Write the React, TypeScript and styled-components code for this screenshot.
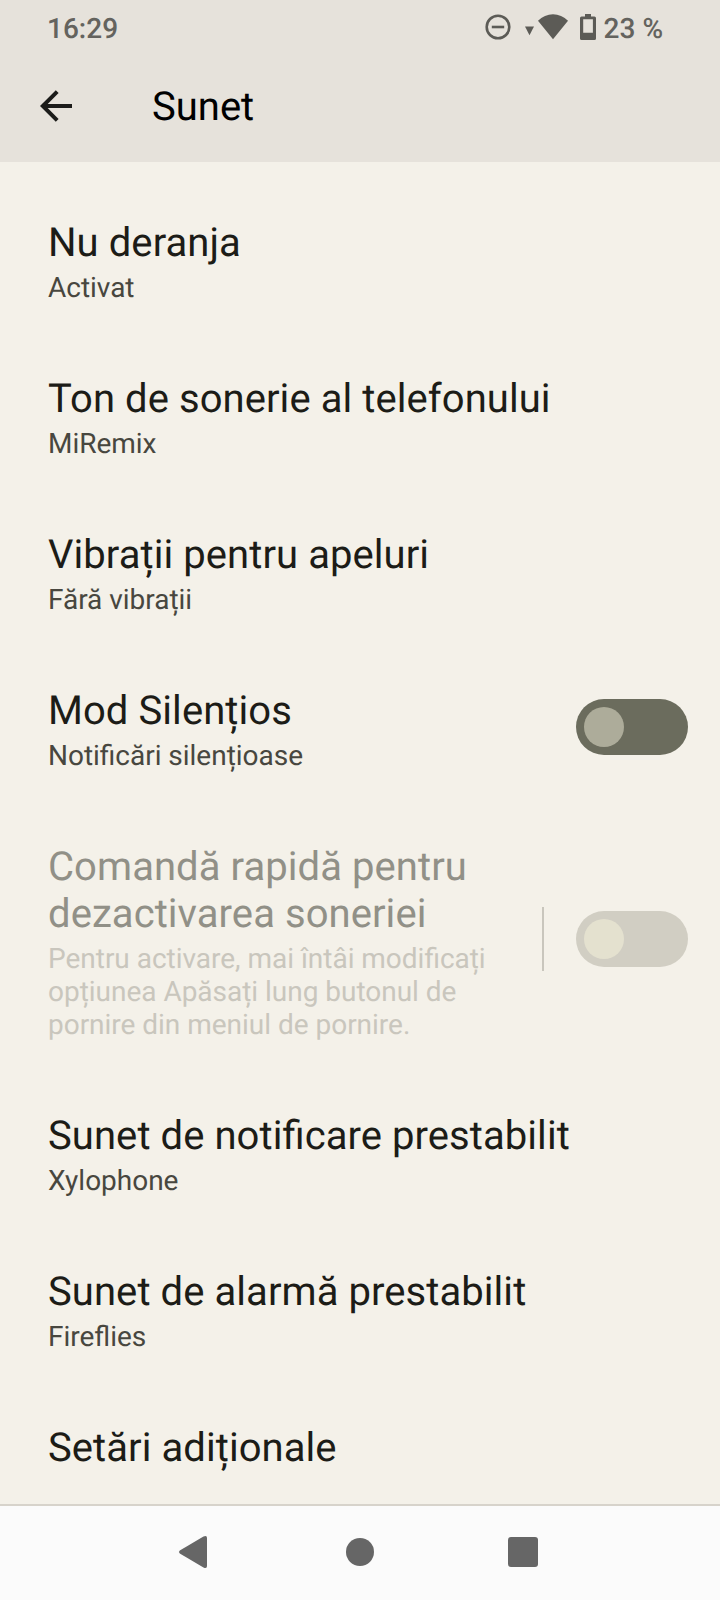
import React from "react";
import styled, { createGlobalStyle } from "styled-components";

const GlobalStyle = createGlobalStyle`
  * { box-sizing: border-box; }
  body {
    margin: 0;
    background: #f4f1e9;
    font-family: Roboto, "Liberation Sans", sans-serif;
    font-feature-settings: "liga" 1;
    text-rendering: geometricPrecision;
  }
`;

const Screen = styled.div`
  display: flex;
  flex-direction: column;
  width: 720px;
  height: 1600px;
  overflow: hidden;
  background: #f4f1e9;
`;

const Header = styled.header`
  flex: none;
  height: 162px;
  background: #e6e2db;
`;

const StatusBar = styled.div`
  display: flex;
  align-items: center;
  justify-content: space-between;
  height: 56px;
  padding: 0 57px 0 47px;
  color: #64635e;
  font-size: 28px;
  font-weight: 500;
  line-height: 33px;
`;

const StatusIcons = styled.div`
  display: flex;
  align-items: center;

  svg {
    flex: none;
    margin: 0 7px 2px 0;
  }
`;

const AppBar = styled.div`
  display: flex;
  align-items: center;
  height: 100px;
  padding-left: 40px;
`;

const BackButton = styled.button`
  display: flex;
  width: 32px;
  height: 32px;
  margin: 0 80px 0 0;
  padding: 0;
  border: 0;
  background: none;
`;

const PageTitle = styled.h1`
  margin: 0;
  color: #000;
  font-size: 40px;
  font-weight: 400;
  line-height: 47px;
`;

const List = styled.main`
  flex: 1;
  min-height: 0;
  padding-top: 19px;
  overflow: hidden;
`;

const Row = styled.section`
  display: flex;
  align-items: center;
  justify-content: space-between;
  padding: 32px 32px 32px 48px;
`;

const Labels = styled.div<{ $narrow?: boolean }>`
  width: ${(p) => (p.$narrow ? "456px" : "auto")};
  padding: 6px 0 1px;
`;

const Title = styled.h2<{ $disabled?: boolean }>`
  margin: 0;
  color: ${(p) => (p.$disabled ? "#919087" : "#1c1c17")};
  font-size: 40px;
  font-weight: 400;
  line-height: 47px;
  letter-spacing: 0.07px;
`;

const Summary = styled.p<{ $disabled?: boolean }>`
  margin: 5px 0 0;
  color: ${(p) => (p.$disabled ? "#c9c6bd" : "#48473f")};
  font-size: 28px;
  line-height: 33px;
  letter-spacing: -0.02px;
`;

const Controls = styled.div`
  display: flex;
  align-items: center;
  gap: 32px;
  margin-bottom: 1px;
`;

const Divider = styled.span`
  width: 2px;
  height: 64px;
  background: #c9c6bd;
`;

const Switch = styled.button<{ $disabled?: boolean }>`
  display: flex;
  align-items: center;
  width: 112px;
  height: 56px;
  padding: 0 8px;
  border: 0;
  border-radius: 28px;
  background: ${(p) => (p.$disabled ? "#d1cec3" : "#6b6c5d")};
`;

const Thumb = styled.span<{ $disabled?: boolean }>`
  width: 40px;
  height: 40px;
  border-radius: 50%;
  background: ${(p) => (p.$disabled ? "#e4e1cf" : "#adac9a")};
`;

const NavBar = styled.nav`
  display: flex;
  flex: none;
  align-items: center;
  justify-content: space-between;
  height: 96px;
  padding: 0 182px 2px 178px;
  border-top: 2px solid #d7d3cb;
  background: #fbfbfb;
`;

type Item = {
  title: string;
  summary?: string;
  toggle?: boolean;
  disabled?: boolean;
};

const items: Item[] = [
  { title: "Nu deranja", summary: "Activat" },
  { title: "Ton de sonerie al telefonului", summary: "MiRemix" },
  { title: "Vibrații pentru apeluri", summary: "Fără vibrații" },
  { title: "Mod Silențios", summary: "Notificări silențioase", toggle: true },
  {
    title: "Comandă rapidă pentru dezactivarea soneriei",
    summary:
      "Pentru activare, mai întâi modificați opțiunea Apăsați lung butonul de pornire din meniul de pornire.",
    toggle: true,
    disabled: true,
  },
  { title: "Sunet de notificare prestabilit", summary: "Xylophone" },
  { title: "Sunet de alarmă prestabilit", summary: "Fireflies" },
  { title: "Setări adiționale" },
];

const StatusGlyphs = () => (
  <svg width="112" height="28" viewBox="485 13 112 28" fill="#5c5b56">
    <circle cx="498" cy="27" r="11.3" fill="none" stroke="#5c5b56" strokeWidth="2.6" />
    <path d="M491.8 25.7h12.4v2.6h-12.4z" />
    <path d="M525 26.5h9l-4.5 8.7z" />
    <path d="M538 20.8Q544.5 14.2 553 14.2T568 20.8L553 39.2z" />
    <path
      fillRule="evenodd"
      d="M585 14h6v2.5h3.4q1.6 0 1.6 1.6v20.3q0 1.6-1.6 1.6h-12.8q-1.6 0-1.6-1.6v-20.3q0-1.6 1.6-1.6h3.4zM583.2 19.2v13.6h9.7v-13.6z"
    />
  </svg>
);

export default function App() {
  return (
    <Screen>
      <GlobalStyle />
      <Header>
        <StatusBar>
          <span>16:29</span>
          <StatusIcons>
            <StatusGlyphs />
            <span>23 %</span>
          </StatusIcons>
        </StatusBar>
        <AppBar>
          <BackButton aria-label="Înapoi">
            <svg width="32" height="32" viewBox="0 0 32 32" fill="none" stroke="#1c1c1a" strokeWidth="4">
              <path d="M32 16H4M17.2 1.6L2.8 16L17.2 30.4" />
            </svg>
          </BackButton>
          <PageTitle>Sunet</PageTitle>
        </AppBar>
      </Header>
      <List>
        {items.map(({ title, summary, toggle, disabled }) => (
          <Row key={title}>
            <Labels $narrow={disabled}>
              <Title $disabled={disabled}>{title}</Title>
              {summary && <Summary $disabled={disabled}>{summary}</Summary>}
            </Labels>
            {toggle && (
              <Controls>
                {disabled && <Divider />}
                <Switch $disabled={disabled} disabled={disabled}>
                  <Thumb $disabled={disabled} />
                </Switch>
              </Controls>
            )}
          </Row>
        ))}
      </List>
      <NavBar>
        <svg width="34" height="34" viewBox="0 0 34 34" fill="#666">
          <path d="M1.8 15.6L25.5 1.5Q29 0 29 3V31Q29 34 25.5 32.5L1.8 18.4Q0 17 1.8 15.6z" />
        </svg>
        <svg width="28" height="28" viewBox="0 0 28 28" fill="#666">
          <circle cx="14" cy="14" r="14" />
        </svg>
        <svg width="30" height="30" viewBox="0 0 30 30" fill="#666">
          <rect width="30" height="30" rx="3" />
        </svg>
      </NavBar>
    </Screen>
  );
}
